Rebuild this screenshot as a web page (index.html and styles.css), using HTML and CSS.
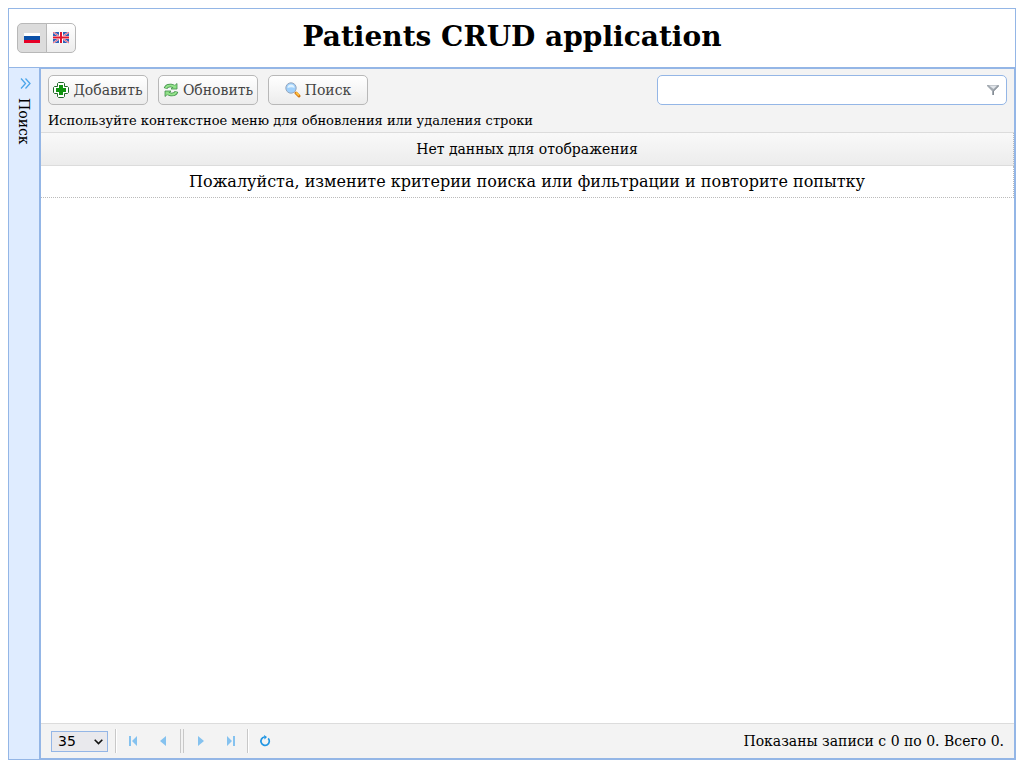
FILE: index.html
```html
<!DOCTYPE html>
<html lang="ru">
<head>
<meta charset="utf-8">
<title>Patients CRUD application</title>
<link rel="stylesheet" href="styles.css">
</head>
<body>
<div class="app">
  <header class="header">
    <div class="languages">
      <button class="language language-active" type="button" aria-label="Русский" aria-pressed="true">
        <svg width="16" height="16" viewBox="0 0 16 16"><path fill="#fff" d="M0 3h16v4H0z"/><path fill="#0b50a8" d="M0 6h16v4H0z"/><path fill="#e60026" d="M0 10h16v3H0z"/></svg>
      </button>
      <button class="language" type="button" aria-label="English" aria-pressed="false">
        <svg width="16" height="12" viewBox="0 0 16 12"><path fill="#2b62ba" d="M0 0h16v11H0z"/><path stroke="#f7dfe8" stroke-width="1.600" d="M0 0l16 11M16 0L0 11"/><path stroke="#e5405c" stroke-width=".8" d="M0 0l16 11M16 0L0 11"/><path fill="#fff" d="M6 0h4v11H6zM0 4h16v3H0z"/><path fill="#e0162f" d="M7 0h2v11H7zM0 4.500h16v2H0z"/></svg>
      </button>
    </div>
    <h1 class="title">Patients CRUD application</h1>
  </header>
  <div class="body">
    <aside class="sidebar">
      <button class="expand" type="button">
        <svg width="11" height="11" viewBox="0 0 11 11" fill="none" stroke="#4ca6ea" stroke-width="1.300"><path d="M1 .5L5.500 5.500 1 10.500M5.500.5L10 5.500 5.500 10.500"/></svg>
        <span class="expand-label">Поиск</span>
      </button>
    </aside>
    <main class="panel">
      <div class="toolbar">
        <div class="actions">
          <button class="action" type="button">
            <svg width="16" height="16" viewBox="0 0 16 16"><path fill="#fff" stroke="#22692a" d="M5.500.5h5l1 1v3h3l1 1v5l-1 1h-3v3l-1 1h-5l-1-1v-3h-3l-1-1v-5l1-1h3v-3z"/><path fill="#0f930f" d="M6 3h4v3h3v4h-3v3H6v-3H3V6h3z"/></svg>
            Добавить
          </button>
          <button class="action" type="button">
            <svg width="16" height="16" viewBox="0 0 16 16"><g fill="none" stroke="#3f8d49" stroke-width="3.600"><path d="M2.500 6.500Q3.500 3.200 8 3.500L11 4.500"/><path d="M13.500 9.500Q12.500 12.800 8 12.500L5 11.500"/></g><g fill="#8fe086" stroke="#3f8d49" stroke-width=".8" stroke-linejoin="round"><path d="M14 1.500V7H8z"/><path d="M2 14.500V9h6z"/></g><g fill="none" stroke="#93e38a" stroke-width="2"><path d="M2.700 6Q4 3.200 8 3.500L12 4.800"/><path d="M13.300 10Q12 12.800 8 12.500L4 11.200"/></g></svg>
            Обновить
          </button>
          <button class="action" type="button">
            <svg width="16" height="16" viewBox="0 0 16 16"><path stroke="#cf7412" stroke-width="3" stroke-linecap="round" d="M11 11l3 3"/><path stroke="#ffbf3c" stroke-width="1.800" d="M11 10.500l3 3"/><circle cx="6" cy="6" r="5.200" fill="#9fd0fc" stroke="#98a8bd"/><path fill="#dff2ff" d="M2.500 6a3.500 3.500 0 017 0C8 5 5 5 2.500 6z"/></svg>
            Поиск
          </button>
        </div>
        <div class="filter">
          <input class="filter-input" type="text" aria-label="Фильтр">
          <svg class="filter-icon" width="12" height="11" viewBox="0 0 12 11"><path fill="#a4abb2" d="M0 0h12v1L7 6v4H5V6L0 1z"/><path fill="#e1e5ea" d="M2 .5h8L6.500 4z"/><path fill="#858c94" d="M6 6l5-5h1L7 6v4H6z"/></svg>
        </div>
        <p class="hint">Используйте контекстное меню для обновления или удаления строки</p>
      </div>
      <table class="grid">
        <thead><tr><th class="grid-head">Нет данных для отображения</th></tr></thead>
        <tbody><tr><td class="grid-cell">Пожалуйста, измените критерии поиска или фильтрации и повторите попытку</td></tr></tbody>
      </table>
      <footer class="pager">
        <span class="page-size-box">
          <select class="page-size" aria-label="Записей на странице"><option>35</option></select>
          <svg class="page-size-arrow" width="9" height="6" viewBox="0 0 9 6" fill="none" stroke="#111" stroke-width="1.600"><path d="M.7.800L4.500 4.600 8.300.8"/></svg>
        </span>
        <span class="divider"></span>
        <button class="page-button" type="button" aria-label="Первая страница" disabled><svg width="10" height="10" viewBox="0 0 10 10"><path d="M1 0h2v10H1zM9 0v10L4 5z"/></svg></button>
        <button class="page-button" type="button" aria-label="Предыдущая страница" disabled><svg width="10" height="10" viewBox="0 0 10 10"><path d="M8 0v10L2 5z"/></svg></button>
        <span class="divider divider-double"></span>
        <button class="page-button" type="button" aria-label="Следующая страница" disabled><svg width="10" height="10" viewBox="0 0 10 10"><path d="M2 0v10l6-5z"/></svg></button>
        <button class="page-button" type="button" aria-label="Последняя страница" disabled><svg width="10" height="10" viewBox="0 0 10 10"><path d="M1 0v10l5-5zM7 0h2v10H7z"/></svg></button>
        <span class="divider"></span>
        <button class="page-button" type="button" aria-label="Обновить"><svg width="12" height="12" viewBox="0 0 12 12"><path fill="none" stroke="#2196e3" stroke-width="1.700" d="M9.200 3.300A4.200 4.200 0 1 1 5.500 2"/><path fill="#2196e3" d="M5 0L8 2 5.500 4.500z"/></svg></button>
        <span class="summary">Показаны записи с 0 по 0. Всего 0.</span>
      </footer>
    </main>
  </div>
</div>
</body>
</html>
```
FILE: styles.css
```css
* { box-sizing: border-box; }

body {
  margin: 8px;
  color: #000;
  font-family: "DejaVu Serif", serif;
  font-size: 14px;
}

button { font: inherit; }

svg { flex: none; }

.app {
  display: flex;
  flex-direction: column;
  min-height: calc(100vh - 16px);
  border: 1px solid #94b6e6;
}

.header {
  display: grid;
  grid-template-columns: 1fr auto 1fr;
  align-items: center;
  min-height: 59px;
  padding: 0 8px;
  border-bottom: 1px solid #94b6e6;
}

.languages {
  display: flex;
  justify-self: start;
}

.language {
  display: flex;
  align-items: center;
  justify-content: center;
  width: 30px;
  height: 30px;
  padding: 0;
  border: 1px solid #b8b8b8;
  border-radius: 5px 0 0 5px;
  background: #dcdcdc;
}

.language:last-child {
  margin-left: -1px;
  border-radius: 0 5px 5px 0;
  background: linear-gradient(#fff, #ececec);
}

.title {
  margin: 0;
  padding-bottom: 2px;
  font-size: 28px;
  line-height: 32px;
}

.body {
  display: flex;
  flex: 1;
}

.sidebar {
  width: 31px;
  border-right: 1px solid #94b6e6;
  background: #dfecff;
}

.expand {
  display: flex;
  flex-direction: column;
  align-items: center;
  gap: 9px;
  width: 100%;
  padding: 10px 0 0 3px;
  border: 0;
  background: none;
  color: #000;
}

.expand-label {
  writing-mode: vertical-rl;
  line-height: 20px;
  margin-right: 4px;
}

.panel {
  display: flex;
  flex: 1;
  flex-direction: column;
  border: 1px solid #94b6e6;
}

.toolbar {
  display: grid;
  grid-template-columns: 1fr minmax(200px, 350px);
  padding: 6px 7px 0;
  border-bottom: 1px solid #dcdcdc;
  background: #f3f3f3;
}

.actions {
  display: flex;
  gap: 10px;
}

.action {
  display: flex;
  align-items: center;
  justify-content: center;
  gap: 4px;
  width: 100px;
  height: 30px;
  padding: 0;
  border: 1px solid #b8b8b8;
  border-radius: 5px;
  background: linear-gradient(#fff, #ececec);
  color: #444;
}

.filter { position: relative; }

.filter-input {
  width: 100%;
  height: 30px;
  padding: 0 28px 0 6px;
  border: 1px solid #94b6e6;
  border-radius: 5px;
  background: #fff;
  font: inherit;
}

.filter-icon {
  position: absolute;
  top: 10px;
  right: 8px;
}

.hint {
  grid-column: 1 / -1;
  margin: 6px 0 2px;
  font-size: 13px;
  line-height: 19px;
}

.grid {
  width: 100%;
  border-spacing: 0;
  text-align: center;
}

.grid-head {
  height: 33px;
  padding: 0;
  border-right: 1px dotted #bbb;
  border-bottom: 1px solid #dcdcdc;
  background: linear-gradient(#f9f9f9, #ececec);
  font-weight: normal;
}

.grid-cell {
  height: 32px;
  padding: 0;
  border-right: 1px dotted #bbb;
  border-bottom: 1px dotted #bbb;
  font-size: 16px;
}

.pager {
  display: flex;
  align-items: center;
  height: 35px;
  margin-top: auto;
  padding: 0 10px;
  border-top: 1px solid #dcdcdc;
  background: #f3f3f3;
}

.page-size-box {
  position: relative;
  display: flex;
  margin-right: 6px;
}

.page-size {
  width: 57px;
  height: 21px;
  padding: 0 6px;
  appearance: none;
  border: 1px solid #94b6e6;
  border-radius: 0;
  background: #e9e9ed;
  color: #000;
  font: 14px "DejaVu Sans", sans-serif;
}

.page-size-arrow {
  position: absolute;
  top: 8px;
  right: 5px;
  pointer-events: none;
}

.divider {
  width: 2px;
  height: 24px;
  margin: 0 1px;
  border-left: 1px solid #c8c8c8;
  border-right: 1px solid #fff;
}

.divider-double {
  width: 4px;
  margin: 0 2px;
  border-right-color: #c8c8c8;
}

.page-button {
  display: flex;
  align-items: center;
  justify-content: center;
  width: 30px;
  height: 24px;
  padding: 0;
  border: 0;
  background: none;
  fill: #85c2ef;
}

.summary { margin-left: auto; }
```
